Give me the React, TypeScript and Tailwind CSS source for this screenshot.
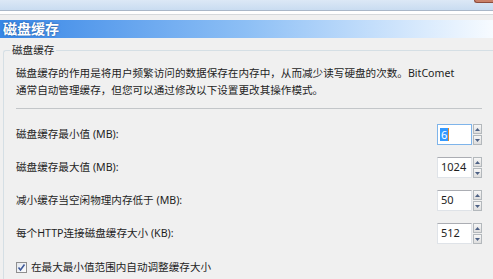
import React from "react";

const FONT = '"Noto Sans", "Noto Sans CJK SC", sans-serif';

type SpinProps = { value: string; focused?: boolean };

function SpinBox({ value, focused }: SpinProps) {
  return (
    <div className="flex items-stretch gap-px h-[21px]">
      <div
        className={
          focused
            ? "w-[35px] bg-white border border-[#7eb4ea] flex items-center pl-[2px]"
            : "w-[35px] bg-white border border-[#dfe3e8] border-t-[#abadb3] flex items-center pl-[3px]"
        }
      >
        {focused ? (
          <span className="flex items-center">
            <span className="bg-[#3399ff] text-white text-[11px] leading-[13px] px-px">{value}</span>
            <span className="w-px h-[13px] bg-[#e08a2c]" />
          </span>
        ) : (
          <span className="text-[11px] text-[#1e1e1e]">{value}</span>
        )}
      </div>
      <div className="w-[9px] flex flex-col gap-px">
        <div className="flex-1 border border-[#b3b8bc] bg-gradient-to-b from-[#f6f6f6] to-[#dedede] flex items-center justify-center">
          <svg width="5" height="3" viewBox="0 0 5 3">
            <path d="M0 3 L2.5 0 L5 3 Z" fill="#4d6185" />
          </svg>
        </div>
        <div className="flex-1 border border-[#b3b8bc] bg-gradient-to-b from-[#f6f6f6] to-[#dedede] flex items-center justify-center">
          <svg width="5" height="3" viewBox="0 0 5 3">
            <path d="M0 0 L5 0 L2.5 3 Z" fill="#4d6185" />
          </svg>
        </div>
      </div>
    </div>
  );
}

const rows = [
  { label: "磁盘缓存最小值 (MB):", value: "6", focused: true },
  { label: "磁盘缓存最大值 (MB):", value: "1024" },
  { label: "减小缓存当空闲物理内存低于 (MB):", value: "50" },
  { label: "每个HTTP连接磁盘缓存大小 (KB):", value: "512" },
];

export default function App() {
  return (
    <div
      className="w-[493px] h-[279px] overflow-hidden bg-[#f0f0f0] text-[#1e1e1e] flex flex-col"
      style={{ fontFamily: FONT }}
    >
      {/* window chrome */}
      <div className="relative h-[10px] bg-gradient-to-b from-[#dce8f6] to-[#c9dcf1]">
        <div className="absolute right-0 top-0 w-[19px] h-[3px] bg-[#c98068] border-b border-l border-[#8e4c3c] rounded-bl-[3px]" />
      </div>
      <div className="h-px bg-[#a9b7c8]" />
      <div className="h-[3px] bg-white" />
      <div className="h-px bg-[#d6d9dc]" />
      <div className="h-[5px]" />

      {/* header */}
      <div className="h-[18px] bg-gradient-to-r from-[#3787e6] via-[#8dbff5] to-[#f7fbff] flex items-center pl-[3px]">
        <span className="text-[14px] font-bold text-white leading-none [text-shadow:0_0_2px_#1d4f91]">
          磁盘缓存
        </span>
      </div>

      <div className="h-[12px]" />

      {/* group box */}
      <div className="relative ml-[3px] flex-1 border-t border-l border-[#d5dfe5] rounded-tl-[3px] pt-[14px] pl-[12px]">
        <span className="absolute -top-[8px] left-[6px] bg-[#f0f0f0] px-[2px] text-[10.6px] leading-[14px]">
          磁盘缓存
        </span>

        <div className="w-[466px] flex flex-col">
          <div className="text-[10.6px] leading-[17px] whitespace-nowrap">
            <div>磁盘缓存的作用是将用户频繁访问的数据保存在内存中，从而减少读写硬盘的次数。BitComet</div>
            <div>通常自动管理缓存，但您可以通过修改以下设置更改其操作模式。</div>
          </div>

          <div className="mt-[9px] h-px bg-[#c3c6c9]" />

          <div className="mt-[15px] flex flex-col gap-[12px]">
            {rows.map((r) => (
              <div key={r.label} className="h-[21px] flex items-center justify-between">
                <span className="text-[10.6px]">{r.label}</span>
                <SpinBox value={r.value} focused={r.focused} />
              </div>
            ))}
          </div>

          <div className="mt-[17px] h-[13px] flex items-center gap-[4px]">
            <div className="w-[11px] h-[11px] border border-[#8f8f8f] bg-gradient-to-br from-[#e4e8ee] to-[#fbfcfd] flex items-center justify-center">
              <svg width="9" height="9" viewBox="0 0 9 9">
                <path d="M1.5 4.5 L3.5 7 L7.5 1.5" fill="none" stroke="#3f5a9a" strokeWidth="1.6" />
              </svg>
            </div>
            <span className="text-[10.6px]">在最大最小值范围内自动调整缓存大小</span>
          </div>
        </div>
      </div>
    </div>
  );
}
